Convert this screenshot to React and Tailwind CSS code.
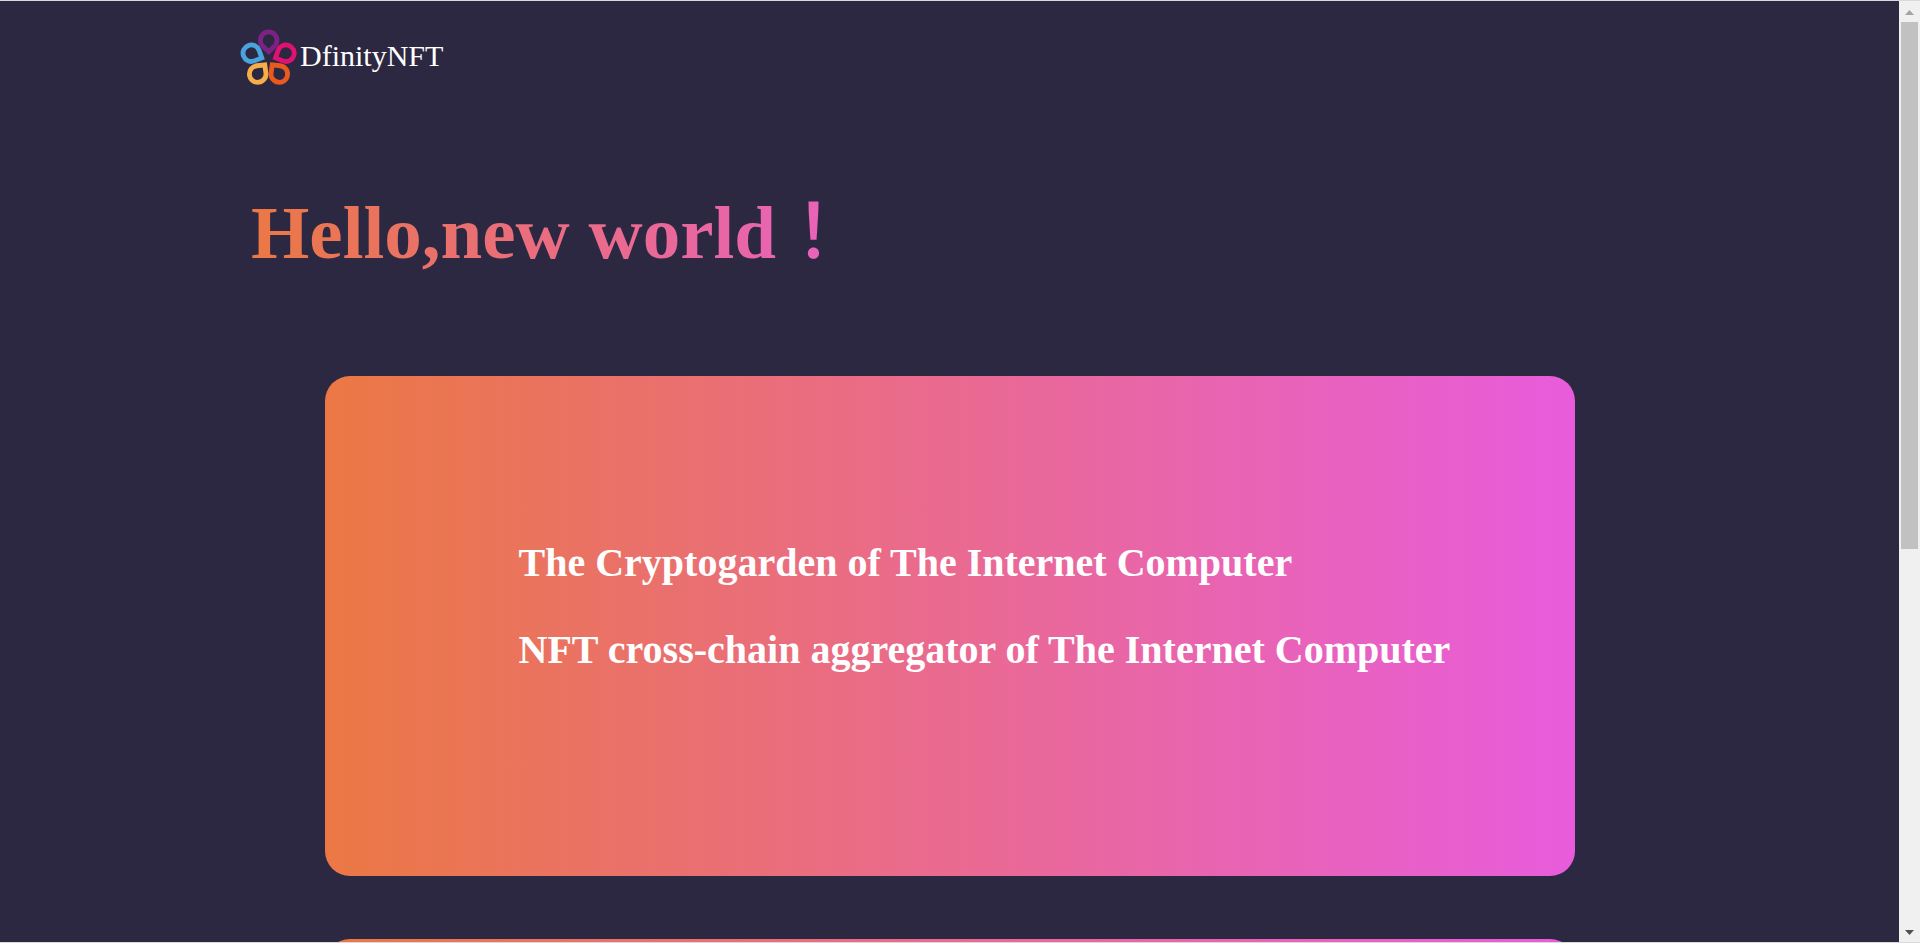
const petals = [
  { color: '#7c2284', place: 'translate(28.7 18.2)' },
  { color: '#df1172', place: 'translate(46 31.2) rotate(66)' },
  { color: '#ea5a1e', place: 'translate(39.3 52) rotate(142)' },
  { color: '#f6ae48', place: 'translate(17.7 52) rotate(-142)' },
  { color: '#4ba3dd', place: 'translate(11.3 31.2) rotate(-66)' },
];

function Logo() {
  return (
    <svg viewBox="0 0 60 70" className="h-[70px] w-[60px]" aria-hidden="true">
      {petals.map((petal) => (
        <path
          key={petal.color}
          d="M0 11.5 L5.74 6 A8.3 8.3 0 1 0 -5.74 6 Z"
          transform={petal.place}
          fill="none"
          stroke={petal.color}
          strokeWidth="4.8"
        />
      ))}
    </svg>
  );
}

function Card({ lines }) {
  return (
    <section className="flex min-h-[500px] w-full max-w-[1250px] shrink-0 flex-col justify-center gap-10 rounded-[25px] bg-linear-to-r/srgb from-[#eb7844] to-[#e85cdc] pr-10 pb-10 pl-[194px]">
      {lines.map((line) => (
        <h2 key={line} className="text-[40px] leading-[47px] font-bold text-white">
          {line}
        </h2>
      ))}
    </section>
  );
}

function Scrollbar() {
  return (
    <div className="flex w-[21px] shrink-0 flex-col items-center bg-[#f0f0f0]" aria-hidden="true">
      <svg viewBox="0 0 21 21" className="h-[21px] w-[21px]">
        <path d="M6 14 L10.5 9 L15 14 Z" fill="#a3a3a3" />
      </svg>
      <div className="flex w-[17px] flex-1 flex-col">
        <div className="h-[58.6%] bg-[#c1c1c1]" />
      </div>
      <svg viewBox="0 0 21 21" className="h-[21px] w-[21px]">
        <path d="M6 9 L10.5 14 L15 9 Z" fill="#505050" />
      </svg>
    </div>
  );
}

export default function App() {
  return (
    <div className="flex h-screen overflow-hidden border-y border-[#d9dadd] bg-[#2d2841] font-['Liberation_Serif','Noto_Sans_CJK_SC',serif]">
      <main className="flex-1 overflow-hidden">
        <header className="px-60 pt-[21px]">
          <a href="#" className="inline-flex items-center text-[30px] leading-9 text-white">
            <Logo />
            <span className="pb-[2px]">DfinityNFT</span>
          </a>
        </header>
        <div className="px-[251px] pt-[84px]">
          <h1 className="w-[740px] bg-linear-to-r/srgb from-[#eb7844] to-[#e85cdc] bg-clip-text text-[75px] leading-[100px] font-bold text-transparent">
            Hello,new world
            <span className="font-['Noto_Sans_CJK_TC',sans-serif] leading-none font-medium">！</span>
          </h1>
        </div>
        <div className="flex flex-col items-center gap-[63px] pt-[93px]">
          <Card
            lines={[
              'The Cryptogarden of The Internet Computer',
              'NFT cross-chain aggregator of The Internet Computer',
            ]}
          />
          <Card lines={[]} />
        </div>
      </main>
      <Scrollbar />
    </div>
  );
}
